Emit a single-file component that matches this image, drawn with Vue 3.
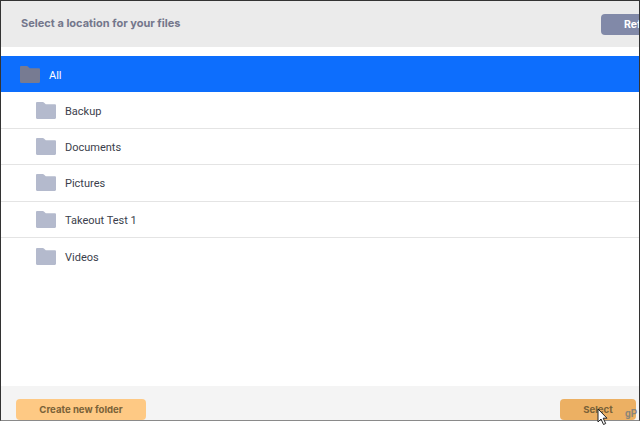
<script setup>
const folders = ['Backup', 'Documents', 'Pictures', 'Takeout Test 1', 'Videos']
</script>

<template>
  <div class="stage">
    <div class="frame">
      <header class="head">
        <span class="title">Select a location for your files</span>
        <button class="refresh">Refresh</button>
      </header>
      <div class="list">
        <div class="row root">
          <svg class="folder" width="20" height="17" viewBox="0 0 20 17"><path d="M0 1.2C0 .5.5 0 1.2 0h5.6c.5 0 .8.2 1.1.5L9.8 2.2h9c.7 0 1.200.5 1.200 1.200v12.400c0 .7-.5 1.200-1.200 1.200H1.200C.5 17 0 16.500 0 15.800z" fill="#777b92"/></svg>
          <span class="label">All</span>
        </div>
        <div v-for="f in folders" :key="f" class="row child">
          <svg class="folder" width="20" height="17" viewBox="0 0 20 17"><path d="M0 1.2C0 .5.5 0 1.2 0h5.6c.5 0 .8.2 1.1.5L9.8 2.2h9c.7 0 1.200.5 1.200 1.200v12.400c0 .7-.5 1.200-1.200 1.200H1.200C.5 17 0 16.500 0 15.800z" fill="#b4bacd"/></svg>
          <span class="label">{{ f }}</span>
        </div>
      </div>
      <footer class="foot">
        <button class="btn create">Create new folder</button>
        <button class="btn select">Select</button>
      </footer>
    </div>
    <svg class="cursor" width="12" height="18" viewBox="0 0 12 18"><path d="M1 1v13l3-3 2.500 5.500 2.200-1-2.500-5.300H10z" fill="#fff" stroke="#222" stroke-width="1"/></svg>
    <span class="mark">gP</span>
  </div>
</template>

<style>
html, body { margin: 0; background: #fff; }
</style>

<style scoped>
.stage {
  position: relative;
  width: 640px;
  height: 435px;
  overflow: hidden;
  font-family: Roboto, "Noto Sans", sans-serif;
}
.frame {
  box-sizing: border-box;
  width: 640px;
  height: 421px;
  border: 1px solid #333;
  border-bottom-color: #8a8a8a;
  overflow: hidden;
  display: flex;
  flex-direction: column;
  background: #fff;
}
.head {
  height: 46px;
  flex: none;
  background: #ebebeb;
  display: flex;
  align-items: center;
  justify-content: space-between;
  padding-left: 20px;
  margin-right: -48px;
}
.title {
  font-family: Inter, sans-serif;
  font-size: 11px;
  font-weight: 700;
  color: #74778c;
  padding-bottom: 2px;
}
.refresh {
  width: 86px;
  height: 21px;
  margin-top: 1px;
  border: 0;
  border-radius: 4px;
  background: #8189a8;
  color: #fff;
  font: 700 10.500px Inter, sans-serif;
  padding: 0;
}
.list {
  flex: 1;
  padding-top: 9px;
  background: #fff;
}
.row {
  height: 36.300px;
  box-sizing: border-box;
  display: flex;
  align-items: center;
  font-size: 11px;
  color: #3b3e4c;
}
.label { padding-top: 2px; }
.root {
  height: 36px;
  margin-bottom: 0.700px;
  background: #0d6efd;
  color: #fff;
  padding-left: 19px;
  gap: 9px;
}
.child {
  padding-left: 35px;
  gap: 9px;
  border-bottom: 1px solid #e4e4e4;
}
.child:last-child { border-bottom: 0; }
.foot {
  height: 34px;
  flex: none;
  background: #f4f4f4;
  display: flex;
  justify-content: space-between;
  align-items: flex-end;
  padding: 0 3px 0 15px;
}
.btn {
  height: 21px;
  border: 0;
  border-radius: 4px;
  padding: 0;
  font: 700 9.600px Inter, sans-serif;
  color: #7a6238;
}
.create { width: 130px; background: #fec984; }
.select { width: 76px; background: #ecb063; }
.cursor { position: absolute; left: 597px; top: 408px; }
.mark {
  position: absolute;
  left: 625px;
  top: 408px;
  font-size: 10px;
  font-weight: 700;
  color: #8a8578;
}
</style>
